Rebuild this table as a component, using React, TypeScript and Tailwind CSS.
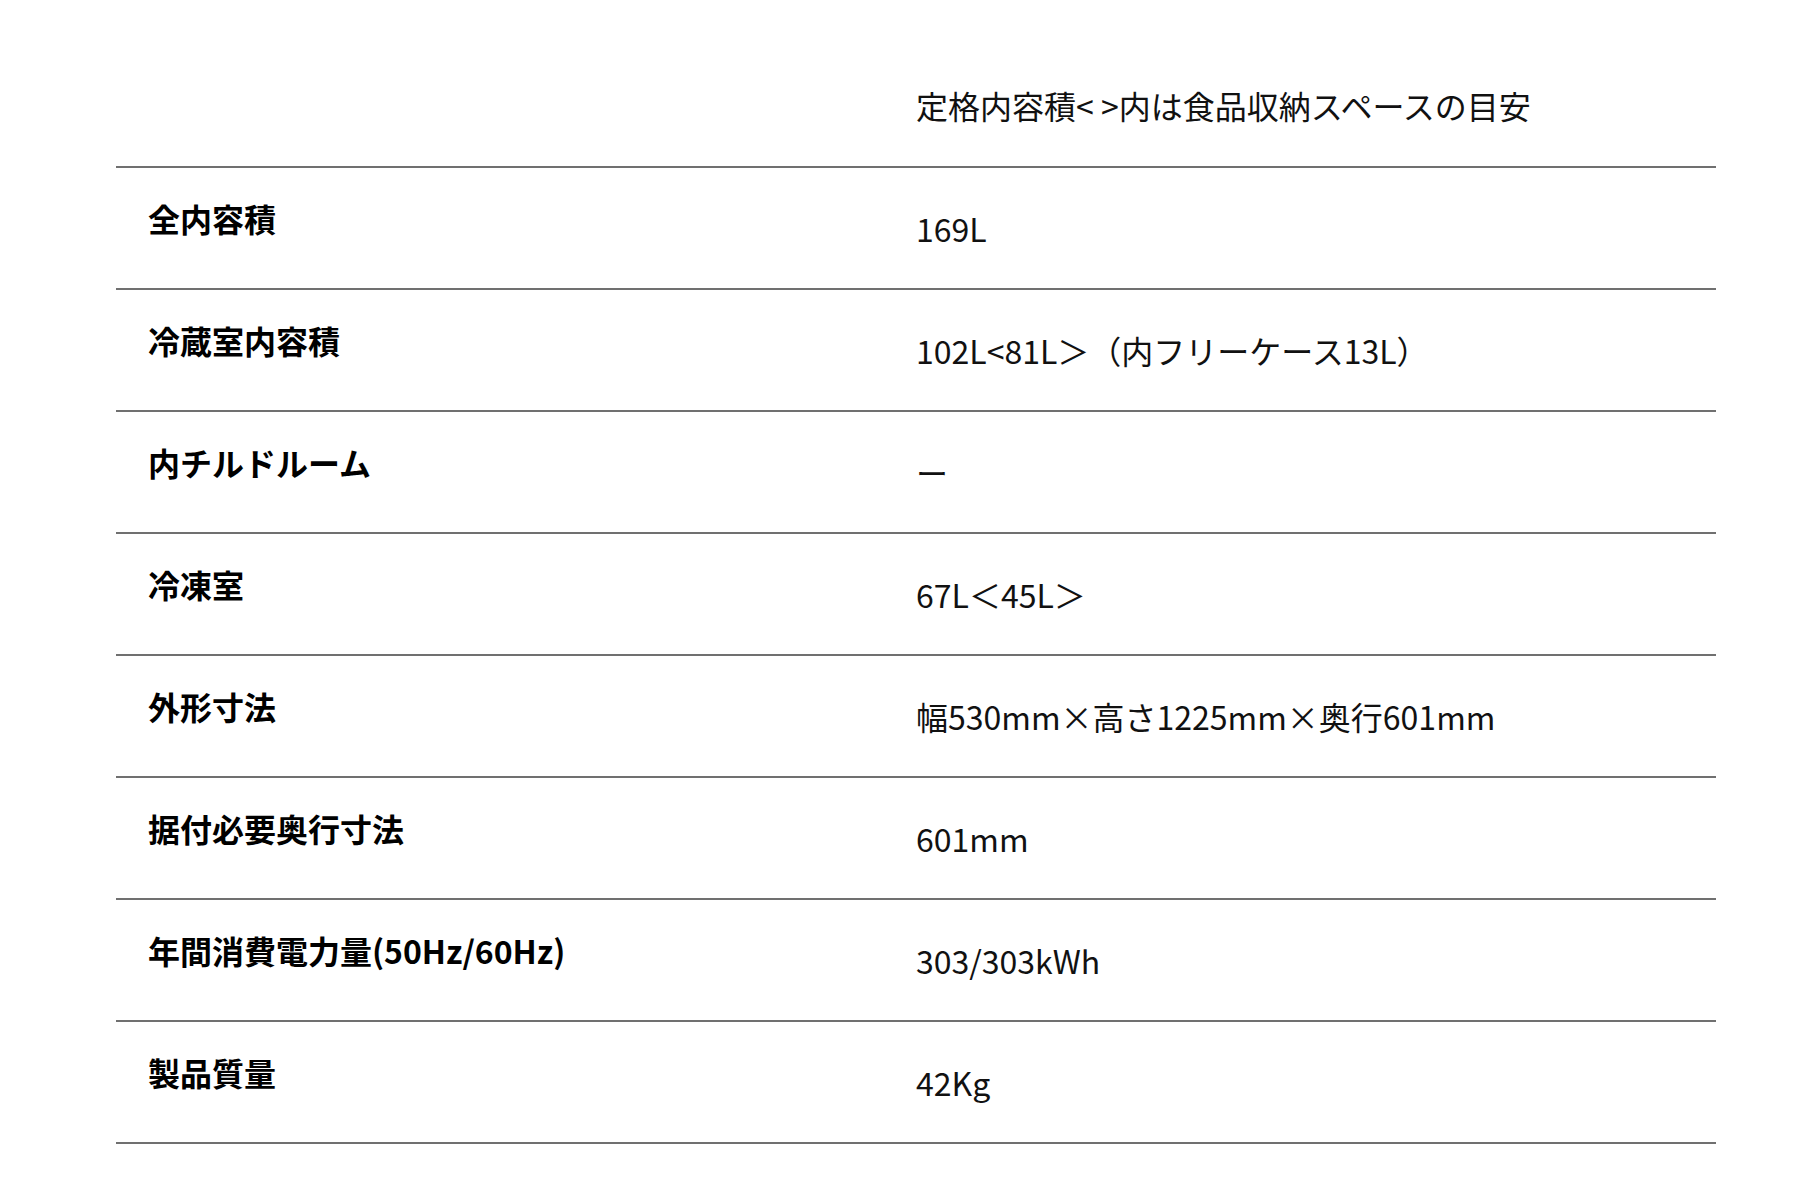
import React from "react";

const rows: { label: string; value: string }[] = [
  { label: "全内容積", value: "169L" },
  { label: "冷蔵室内容積", value: "102L<81L＞（内フリーケース13L）" },
  { label: "内チルドルーム", value: "ー" },
  { label: "冷凍室", value: "67L＜45L＞" },
  { label: "外形寸法", value: "幅530mm×高さ1225mm×奥行601mm" },
  { label: "据付必要奥行寸法", value: "601mm" },
  { label: "年間消費電力量(50Hz/60Hz)", value: "303/303kWh" },
  { label: "製品質量", value: "42Kg" },
];

export default function App() {
  return (
    <div
      className="min-h-[1202px] w-full bg-white"
      style={{ fontFamily: '"Noto Sans CJK JP", "Noto Sans", sans-serif' }}
    >
      <div className="ml-[116px] w-[1600px]">
        <div className="grid grid-cols-2 border-b-2 border-[#707070] h-[168px]">
          <div />
          <div className="pt-[81px] text-[32px] leading-[48px] font-normal text-[#111]">
            定格内容積&lt; &gt;内は食品収納スペースの目安
          </div>
        </div>
        {rows.map((r) => (
          <div
            key={r.label}
            className="grid grid-cols-2 items-start border-b-2 border-[#707070] h-[122px]"
          >
            <div className="pl-[32px] pt-[26px] text-[32px] leading-[48px] font-bold text-black">
              {r.label}
            </div>
            <div className="pt-[36px] text-[32px] leading-[48px] font-normal text-[#111]">
              {r.value}
            </div>
          </div>
        ))}
      </div>
    </div>
  );
}
